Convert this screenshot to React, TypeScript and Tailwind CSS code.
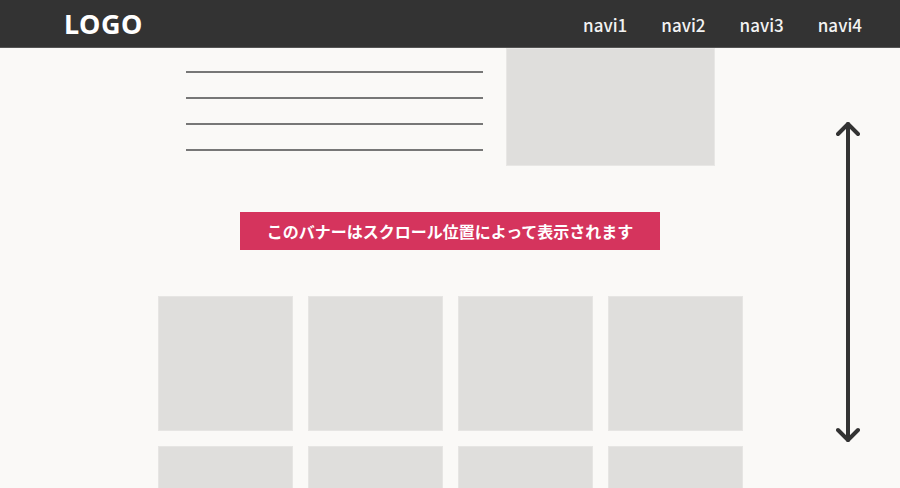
const navItems = ['navi1', 'navi2', 'navi3', 'navi4'];

const App = () => {
  return (
    <div className="relative min-h-[488px] h-[488px] overflow-hidden bg-[#faf9f7] font-['Noto_Sans','Noto_Sans_CJK_JP',sans-serif]">
      {/* Header */}
      <header className="h-[48px] bg-[#333333] border-b border-[#555] flex items-center justify-between pl-[64px] pr-[38px]">
        <div className="text-[27px] font-bold text-white tracking-[0.5px] leading-none">LOGO</div>
        <nav className="flex items-center gap-[34px] pt-[1px]">
          {navItems.map((item) => (
            <a
              key={item}
              href="#"
              className="text-[17px] font-medium text-[#f2f2f2] leading-none font-['Noto_Sans_CJK_JP',sans-serif]"
            >
              {item}
            </a>
          ))}
        </nav>
      </header>

      {/* Top section */}
      <section className="flex justify-center gap-[23px]">
        <div className="w-[297px] flex flex-col gap-[24px] pt-[23px]">
          {[0, 1, 2, 3].map((i) => (
            <div key={i} className="h-[2px] bg-[#777777]" />
          ))}
        </div>
        <div className="w-[209px] h-[118px] bg-[#dfdedc] border border-[#e8e7e5]" />
      </section>

      {/* Banner */}
      <div className="flex justify-center mt-[46px]">
        <div className="w-[420px] h-[38px] bg-[#d5345d] flex items-center justify-center text-white text-[16px] font-bold font-['Noto_Sans_CJK_JP',sans-serif]">
          このバナーはスクロール位置によって表示されます
        </div>
      </div>

      {/* Grid */}
      <div className="flex justify-center mt-[46px]">
        <div className="grid grid-cols-4 gap-[15px]">
          {Array.from({ length: 8 }).map((_, i) => (
            <div key={i} className="w-[135px] h-[135px] bg-[#dfdedc] border border-[#e6e5e3]" />
          ))}
        </div>
      </div>

      {/* Scroll arrow */}
      <svg
        className="absolute left-[836px] top-[120px]"
        width="24"
        height="324"
        viewBox="0 0 24 324"
        fill="none"
        stroke="#333333"
        strokeWidth="4"
        strokeLinecap="round"
        strokeLinejoin="round"
      >
        <line x1="12" y1="4" x2="12" y2="320" />
        <polyline points="2,14 12,4 22,14" />
        <polyline points="2,310 12,320 22,310" />
      </svg>
    </div>
  );
};

export default App;
